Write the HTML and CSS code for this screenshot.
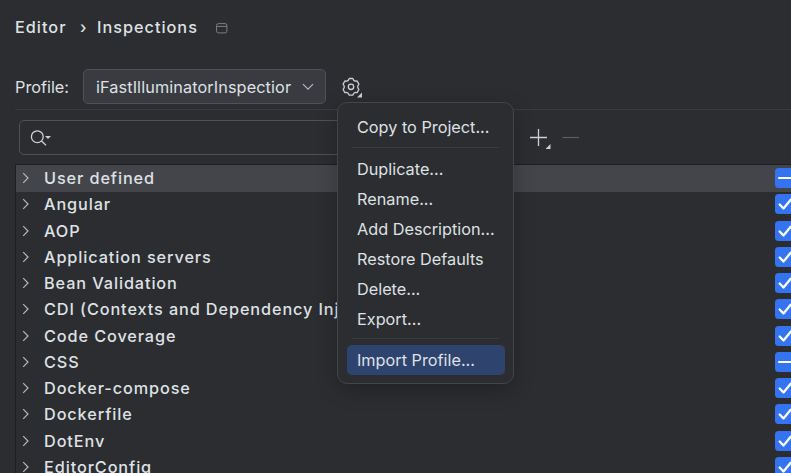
FILE: index.html
```html
<!DOCTYPE html>
<html lang="en">
<head>
<meta charset="utf-8">
<title>Inspections</title>
<link rel="stylesheet" href="styles.css">
</head>
<body>
<svg class="defs" width="0" height="0">
  <symbol id="chev" viewBox="0 0 8 12"><path d="M1.2 1.2 6 6 1.2 10.8" fill="none" stroke="#b4b8bf" stroke-width="1.2"/></symbol>
  <symbol id="check" viewBox="0 0 20 20"><rect width="20" height="20" rx="3.5" fill="#3574f0"/><path d="M4.7 10.5 8.5 14.500 15.700 5.800" fill="none" stroke="#fff" stroke-width="2.3" stroke-linecap="round" stroke-linejoin="round"/></symbol>
  <symbol id="mixed" viewBox="0 0 20 20"><rect width="20" height="20" rx="3.5" fill="#3574f0"/><path d="M4 10H16" stroke="#fff" stroke-width="2.2" stroke-linecap="round"/></symbol>
</svg>
<header class="crumbs">
  <span class="crumb-a">Editor</span><span class="crumb-sep">›</span><span class="crumb-b">Inspections</span>
  <svg class="window-icon" width="12" height="11" viewBox="0 0 12 11" fill="none" stroke="#7b7f86"><rect x=".6" y=".6" width="10.3" height="9.3" rx="1.8"/><path d="M.6 3.4H11"/></svg>
</header>
<div class="profile">
  <span class="label">Profile:</span>
  <div class="combo"><span>iFastIlluminatorInspectior</span>
    <svg width="12" height="8" viewBox="0 0 12 8" fill="none" stroke="#b4b8bf" stroke-width="1.2"><path d="M1 1.2 6 6.2 11 1.2"/></svg>
  </div>
  <svg class="gear" width="22" height="22" viewBox="0 0 22 22"><g fill="none" stroke="#ced0d6" stroke-width="1.3" stroke-linejoin="round"><path d="M8.2 3.4 9.2 1.5h3.6l1 1.9 1.2.7 2.1-.1 1.8 3.1-1.1 1.9v1.6l1.1 1.9-1.8 3.1-2.1-.1-1.2.7-1 1.9H9.2l-1-1.9-1.2-.7-2.1.1-1.8-3.1 1.1-1.9V9l-1.1-1.9 1.8-3.1 2.1.1z"/><circle cx="11" cy="9.8" r="2.7"/></g><path d="M22 15.500V20.500H17z" fill="#ced0d6"/></svg>
</div>
<div class="tools">
  <div class="search">
    <svg width="22" height="18" viewBox="0 0 22 18"><g fill="none" stroke="#ced0d6" stroke-width="1.3"><circle cx="7.3" cy="7.7" r="5.9"/><path d="m11.5 12 4.500 4.300"/></g><path d="M15 7h6l-3 3z" fill="#ced0d6"/></svg>
  </div>
  <svg class="plus" width="50" height="21" viewBox="0 0 50 21"><path d="M0 8.5H17M8.5 0V17" stroke="#ced0d6" stroke-width="1.3"/><path d="M20.500 15V20H15.500z" fill="#ced0d6"/><path d="M32.500 8.500H49" stroke="#5a5d63" stroke-width="1.200"/></svg>
</div>
<main class="tree">
  <div class="row selected"><svg class="chev"><use href="#chev"/></svg><span>User defined</span><svg class="box"><use href="#mixed"/></svg></div>
  <div class="row"><svg class="chev"><use href="#chev"/></svg><span>Angular</span><svg class="box"><use href="#check"/></svg></div>
  <div class="row"><svg class="chev"><use href="#chev"/></svg><span>AOP</span><svg class="box"><use href="#check"/></svg></div>
  <div class="row"><svg class="chev"><use href="#chev"/></svg><span>Application servers</span><svg class="box"><use href="#check"/></svg></div>
  <div class="row"><svg class="chev"><use href="#chev"/></svg><span>Bean Validation</span><svg class="box"><use href="#check"/></svg></div>
  <div class="row"><svg class="chev"><use href="#chev"/></svg><span>CDI (Contexts and Dependency Inj</span><svg class="box"><use href="#check"/></svg></div>
  <div class="row"><svg class="chev"><use href="#chev"/></svg><span>Code Coverage</span><svg class="box"><use href="#check"/></svg></div>
  <div class="row"><svg class="chev"><use href="#chev"/></svg><span>CSS</span><svg class="box"><use href="#mixed"/></svg></div>
  <div class="row"><svg class="chev"><use href="#chev"/></svg><span>Docker-compose</span><svg class="box"><use href="#check"/></svg></div>
  <div class="row"><svg class="chev"><use href="#chev"/></svg><span>Dockerfile</span><svg class="box"><use href="#check"/></svg></div>
  <div class="row"><svg class="chev"><use href="#chev"/></svg><span>DotEnv</span><svg class="box"><use href="#check"/></svg></div>
  <div class="row"><svg class="chev"><use href="#chev"/></svg><span>EditorConfig</span><svg class="box"><use href="#check"/></svg></div>
</main>
<nav class="menu">
  <div class="item">Copy to Project...</div>
  <hr>
  <div class="item">Duplicate...</div>
  <div class="item">Rename...</div>
  <div class="item">Add Description...</div>
  <div class="item">Restore Defaults</div>
  <div class="item">Delete...</div>
  <div class="item">Export...</div>
  <hr class="last">
  <div class="item active">Import Profile...</div>
</nav>
</body>
</html>
```
FILE: styles.css
```css
* { box-sizing: border-box; }
body {
  margin: 0;
  width: 791px;
  height: 473px;
  overflow: hidden;
  position: relative;
  background: #2b2d30;
  color: #dfe1e5;
  font: 16.25px/20px Inter, sans-serif;
  white-space: nowrap;
}
svg { display: block; flex: none; }
.defs { position: absolute; }
.crumbs {
  display: flex;
  align-items: center;
  height: 54px;
  padding-left: 15px;
  font-weight: 500;
  letter-spacing: 1px;
}
.crumb-sep { width: 31px; padding-left: 14px; }
.crumb-a { width: 51px; }
.crumb-b { width: 119px; }
.window-icon { margin-top: 2px; }
.profile {
  display: flex;
  align-items: center;
  height: 56px;
  margin-left: 15px;
  padding-bottom: 1px;
  padding-top: 11px;
  border-bottom: 1px solid #393b40;
}
.label { width: 68px; }
.combo {
  display: flex;
  align-items: center;
  justify-content: space-between;
  width: 243px;
  height: 35px;
  padding: 0 11px 0 12px;
  background: #393b40;
  border: 1px solid #4e5157;
  border-radius: 5px;
  letter-spacing: .1px;
}
.gear { margin: 3px 0 0 14px; }
.tools {
  display: flex;
  height: 54px;
  padding: 10px 0 0 19px;
}
.search {
  width: 487px;
  height: 35px;
  padding: 8px 10px;
  border: 1px solid #4e5157;
  border-radius: 5px;
}
.plus { margin: 9px 0 0 24px; }
.tree {
  height: 320px;
  margin-left: 15px;
  border: solid #1e1f22;
  border-width: 1px 0 0 1px;
}
.row {
  display: flex;
  align-items: center;
  height: 26.25px;
  padding-bottom: 1px;
  font-weight: 500;
  letter-spacing: .9px;
}
.selected { height: 26.75px; background: #43454a; }
.row span { flex: 1; }
.chev { width: 8px; height: 12px; margin: 0 14px 0 6px; }
.box { width: 20px; height: 20px; margin-right: -4px; }
.menu {
  position: absolute;
  left: 337px;
  top: 102px;
  width: 177px;
  height: 282px;
  padding: 9px 9px;
  background: #2b2d30;
  border: 1px solid #43454a;
  border-radius: 10px;
  box-shadow: 0 6px 20px rgba(0, 0, 0, .25);
}
.item {
  height: 30px;
  padding: 0 10px;
  line-height: 30px;
  border-radius: 5px;
}
.menu hr {
  height: 1px;
  margin: 5px 5px 6px;
  border: 0;
  background: #393b40;
}
.menu hr.last { margin: 4px 5px 6px; }
.active { width: 158px; background: #2e436e; }
```
